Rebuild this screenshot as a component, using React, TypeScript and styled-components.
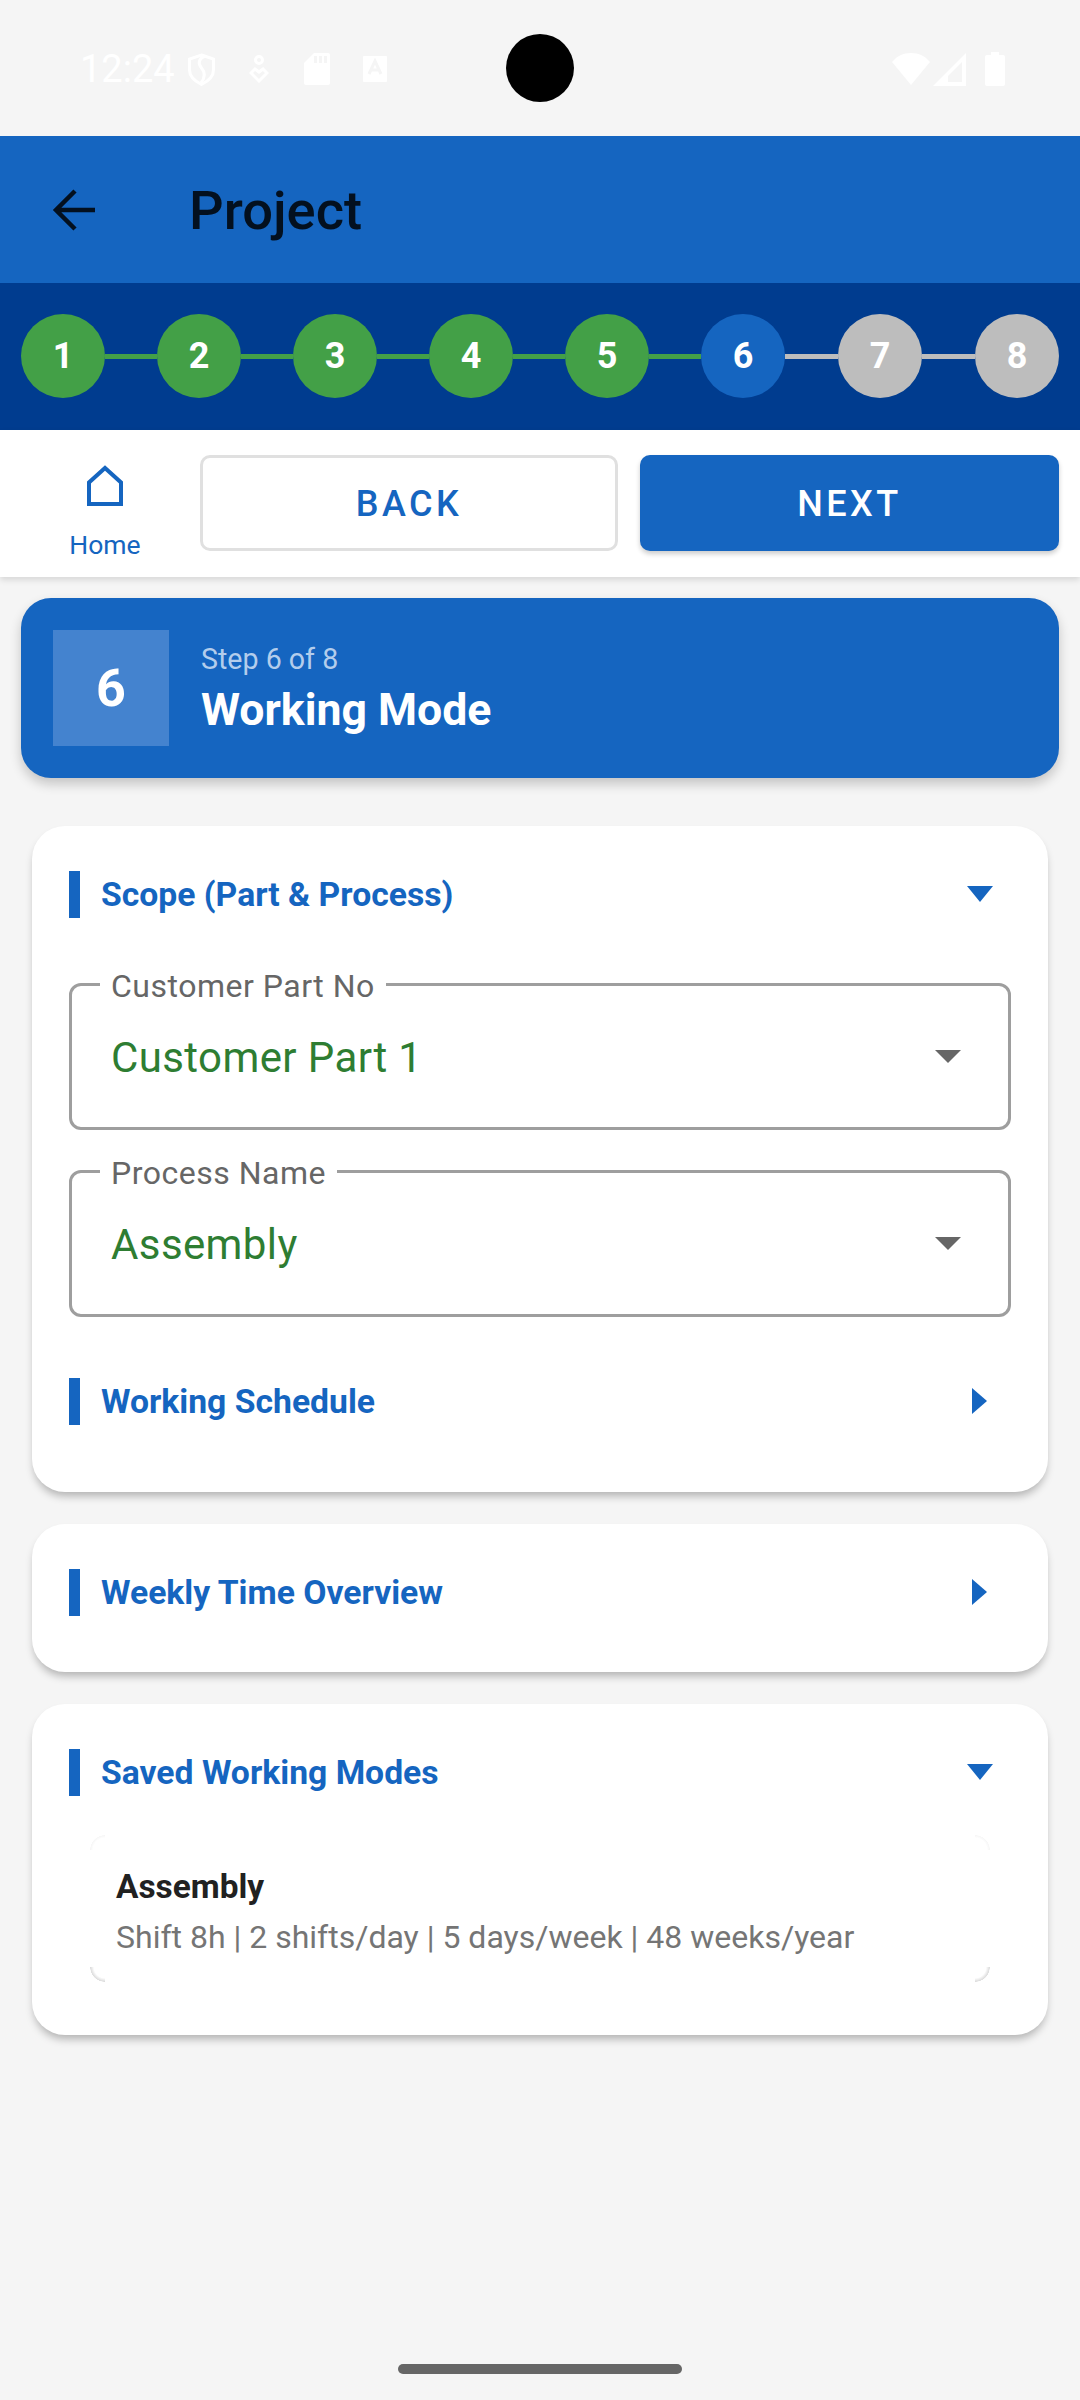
import React from 'react';
import styled, { createGlobalStyle } from 'styled-components';

const steps = [1, 2, 3, 4, 5, 6, 7, 8];
const currentStep = 6;

const stepColor = (n: number) => {
  if (n < currentStep) return '#43a047';
  if (n === currentStep) return '#1565c0';
  return '#bdbdbd';
};

const App = () => {
  return (
    <Page>
      <GlobalStyle />
      <StatusBar>
        <StatusLeft>
          <Clock>12:24</Clock>
          <StatusIcon $gap={16} width="29" height="33" viewBox="0 0 29 33" fill="none" stroke="#fff" strokeWidth="3">
            <path d="M14.5 2l12 4v11c0 6-5 11-12 14.500C7.500 28 2.500 23 2.500 17V6z" />
            <path d="M18 3c-7 3-7 8-3.500 12s4 9-.5 15" />
          </StatusIcon>
          <StatusIcon $gap={33} width="20" height="28" viewBox="0 0 20 28" fill="none" stroke="#fff" strokeWidth="3">
            <circle cx="10" cy="5" r="3.500" />
            <path d="M10 26L2 18l4-4 4 3 4-3 4 4z" />
          </StatusIcon>
          <StatusIcon $gap={35} width="26" height="32" viewBox="0 0 26 32" fill="#fff">
            <path d="M10 0h14a2 2 0 0 1 2 2v28a2 2 0 0 1-2 2H2a2 2 0 0 1-2-2V10z" />
            <path d="M10 3h3v7h-3zM15 3h3v7h-3zM20 3h3v7h-3z" fill="#f5f5f5" />
          </StatusIcon>
          <StatusIcon $gap={33} width="24" height="26" viewBox="0 0 24 26">
            <path fill="#fff" d="M1 0h22a1 1 0 0 1 1 1v24a1 1 0 0 1-1 1H1a1 1 0 0 1-1-1V1a1 1 0 0 1 1-1z" />
            <path fill="none" stroke="#f5f5f5" strokeWidth="3" d="M6 18L12 5l6 13M8 14h8" />
          </StatusIcon>
        </StatusLeft>
        <Camera />
        <StatusRight>
          <StatusIcon $gap={0} width="38" height="32" viewBox="0 0 38 32" fill="#fff">
            <path d="M0 9C5 3 11 0 19 0s14 3 19 9L19 32z" />
          </StatusIcon>
          <StatusIcon $gap={3} width="33" height="33" viewBox="0 0 33 33">
            <path fill="#fff" fillRule="evenodd" d="M33 0v33H0zM29 9L15 23v6h14z" />
          </StatusIcon>
          <StatusIcon $gap={19} width="20" height="34" viewBox="0 0 20 34" fill="#fff">
            <path d="M6 0h8v3h4a2 2 0 0 1 2 2v27a2 2 0 0 1-2 2H2a2 2 0 0 1-2-2V5a2 2 0 0 1 2-2h4z" />
          </StatusIcon>
        </StatusRight>
      </StatusBar>

      <AppBar>
        <svg width="44" height="44" viewBox="0 0 44 44" fill="none" stroke="#03101f" strokeWidth="4.5">
          <path d="M44 22H5M24 3L5 22l19 19" />
        </svg>
        <AppBarTitle>Project</AppBarTitle>
      </AppBar>

      <Stepper>
        {steps.map((n) => (
          <React.Fragment key={n}>
            {n > 1 && <StepLine $done={n <= currentStep} />}
            <StepDot $color={stepColor(n)}>{n}</StepDot>
          </React.Fragment>
        ))}
      </Stepper>

      <ActionBar>
        <HomeTab>
          <HomeIcon width="36" height="41" viewBox="0 0 36 41" fill="none" stroke="#1565c0" strokeWidth="4">
            <path d="M2 39V17.500L18 3l16 14.500V39z" />
          </HomeIcon>
          <HomeLabel>Home</HomeLabel>
        </HomeTab>
        <BackButton>BACK</BackButton>
        <NextButton>NEXT</NextButton>
      </ActionBar>

      <StepCard>
        <StepBadge>6</StepBadge>
        <div>
          <StepCaption>Step 6 of 8</StepCaption>
          <StepName>Working Mode</StepName>
        </div>
      </StepCard>

      <CardStack>
        <Card $bottom={67}>
          <SectionHead>
            <SectionTitle>Scope (Part &amp; Process)</SectionTitle>
            <Caret $dir="down" />
          </SectionHead>
          <Fields>
            <SelectField>
              <FieldLabel>Customer Part No</FieldLabel>
              <FieldValue>Customer Part 1</FieldValue>
              <SelectArrow />
            </SelectField>
            <SelectField>
              <FieldLabel>Process Name</FieldLabel>
              <FieldValue>Assembly</FieldValue>
              <SelectArrow />
            </SelectField>
          </Fields>
          <SubSection>
            <SectionTitle>Working Schedule</SectionTitle>
            <Caret $dir="right" />
          </SubSection>
        </Card>

        <Card $bottom={56}>
          <SectionHead>
            <SectionTitle>Weekly Time Overview</SectionTitle>
            <Caret $dir="right" />
          </SectionHead>
        </Card>

        <Card $bottom={53}>
          <SectionHead>
            <SectionTitle>Saved Working Modes</SectionTitle>
            <Caret $dir="down" />
          </SectionHead>
          <SavedItem>
            <SavedName>Assembly</SavedName>
            <SavedMeta>Shift 8h | 2 shifts/day | 5 days/week | 48 weeks/year</SavedMeta>
          </SavedItem>
        </Card>
      </CardStack>

      <HomeIndicator />
    </Page>
  );
};

export default App;

const GlobalStyle = createGlobalStyle`
  html, body {
    margin: 0;
    padding: 0;
    background: #f5f5f5;
  }
  * {
    box-sizing: border-box;
  }
`;

const Page = styled.div`
  position: relative;
  width: 1080px;
  height: 2400px;
  overflow: hidden;
  background: #f5f5f5;
  font-family: Roboto, 'Liberation Sans', sans-serif;
`;

const StatusBar = styled.div`
  position: relative;
  height: 136px;
  display: flex;
  align-items: center;
  justify-content: space-between;
  padding: 2px 75px 0 80px;
`;

const StatusLeft = styled.div`
  display: flex;
  align-items: center;
`;

const StatusRight = styled.div`
  display: flex;
  align-items: center;
`;

const StatusIcon = styled.svg<{ $gap: number }>`
  display: block;
  flex: none;
  margin-left: ${(p) => p.$gap}px;
`;

const Clock = styled.span`
  width: 91px;
  font-size: 38px;
  line-height: 44px;
  white-space: nowrap;
  color: #fff;
`;

const Camera = styled.div`
  position: absolute;
  left: 506px;
  top: 34px;
  width: 68px;
  height: 68px;
  border-radius: 50%;
  background: #000;
`;

const AppBar = styled.header`
  height: 147px;
  background: #1565c0;
  display: flex;
  align-items: center;
  padding-left: 51px;
  gap: 94px;
`;

const AppBarTitle = styled.h1`
  margin: 0 0 -2px;
  font-size: 54.300px;
  font-weight: 500;
  color: #03101f;
`;

const Stepper = styled.div`
  height: 147px;
  background: #003c8f;
  display: flex;
  align-items: center;
  padding: 0 21px 1px;
`;

const StepDot = styled.div<{ $color: string }>`
  flex: none;
  width: 84px;
  height: 84px;
  border-radius: 50%;
  background: ${(p) => p.$color};
  color: #fff;
  display: flex;
  align-items: center;
  justify-content: center;
  font-size: 36px;
  font-weight: 700;
`;

const StepLine = styled.div<{ $done: boolean }>`
  flex: none;
  width: ${(p) => (p.$done ? 52 : 53)}px;
  height: 5px;
  background: ${(p) => (p.$done ? '#43a047' : '#bdbdbd')};
`;

const ActionBar = styled.div`
  position: relative;
  height: 147px;
  background: #fff;
  display: flex;
  align-items: center;
  padding: 0 21px 1px;
  box-shadow: 0 3px 6px rgba(0, 0, 0, 0.12);
`;

const HomeTab = styled.div`
  width: 168px;
  align-self: flex-start;
  padding-top: 35px;
  display: flex;
  flex-direction: column;
  align-items: center;
`;

const HomeIcon = styled.svg`
  display: block;
`;

const HomeLabel = styled.span`
  margin-top: 23px;
  font-size: 26.500px;
  line-height: 32px;
  color: #1565c0;
`;

const BaseButton = styled.div`
  height: 96px;
  padding-top: 2px;
  border-radius: 10px;
  display: flex;
  align-items: center;
  justify-content: center;
  font-size: 36px;
  font-weight: 500;
  letter-spacing: 3.500px;
`;

const BackButton = styled(BaseButton)`
  width: 418px;
  margin-left: 11px;
  background: #fff;
  border: 3px solid #e0e0e0;
  color: #1565c0;
`;

const NextButton = styled(BaseButton)`
  width: 419px;
  margin-left: 22px;
  background: #1565c0;
  color: #fff;
  box-shadow: 0 3px 5px rgba(0, 0, 0, 0.2);
`;

const StepCard = styled.section`
  height: 180px;
  margin: 21px 21px 0;
  padding: 32px;
  display: flex;
  align-items: flex-start;
  gap: 32px;
  background: #1565c0;
  border-radius: 30px;
  box-shadow: 0 6px 12px rgba(0, 0, 0, 0.2);
`;

const StepBadge = styled.div`
  width: 116px;
  height: 116px;
  background: #4483cf;
  color: #fff;
  display: flex;
  align-items: center;
  justify-content: center;
  font-size: 52px;
  font-weight: 700;
`;

const StepCaption = styled.div`
  margin-top: 12px;
  font-size: 28.600px;
  line-height: 34px;
  color: #b3cdec;
`;

const StepName = styled.div`
  margin-top: 9px;
  font-size: 44.600px;
  line-height: 50px;
  font-weight: 700;
  color: #fff;
`;

const CardStack = styled.div`
  margin: 48px 32px 0;
  display: flex;
  flex-direction: column;
  gap: 32px;
`;

const Card = styled.section<{ $bottom: number }>`
  padding: 45px 37px ${(p) => p.$bottom}px;
  background: #fff;
  border-radius: 33px;
  box-shadow: 0 6px 8px -2px rgba(0, 0, 0, 0.28);
`;

const SectionHead = styled.div`
  height: 47px;
  display: flex;
  align-items: center;
  justify-content: space-between;
  padding-left: 21px;
  padding-right: 18px;
  border-left: 11px solid #1565c0;
`;

const SubSection = styled(SectionHead)`
  margin-top: 61px;
`;

const SectionTitle = styled.h2`
  margin: 0;
  font-size: 33.700px;
  font-weight: 700;
  color: #1565c0;
`;

const Caret = styled.div<{ $dir: 'down' | 'right' }>`
  width: 0;
  height: 0;
  ${(p) =>
    p.$dir === 'down'
      ? `
    margin-top: -2px;
    border-left: 13px solid transparent;
    border-right: 13px solid transparent;
    border-top: 16px solid #1565c0;
  `
      : `
    margin-top: -2px;
    margin-right: 6px;
    border-top: 13px solid transparent;
    border-bottom: 13px solid transparent;
    border-left: 15px solid #1565c0;
  `}
`;

const Fields = styled.div`
  margin-top: 65px;
  display: flex;
  flex-direction: column;
  gap: 40px;
`;

const SelectField = styled.div`
  position: relative;
  height: 147px;
  border: 3px solid #9e9e9e;
  border-radius: 12px;
  display: flex;
  align-items: center;
  padding: 0 0 0 39px;
`;

const FieldLabel = styled.span`
  position: absolute;
  left: 28px;
  top: -18px;
  padding: 0 11px;
  background: #fff;
  font-size: 32px;
  line-height: 36px;
  letter-spacing: 0.500px;
  color: #666;
`;

const FieldValue = styled.span`
  margin-top: 2px;
  font-size: 42px;
  letter-spacing: 0.400px;
  color: #2e7d32;
`;

const SelectArrow = styled.div`
  margin-left: auto;
  margin-right: 47px;
  width: 0;
  height: 0;
  border-left: 13px solid transparent;
  border-right: 13px solid transparent;
  border-top: 13px solid #666;
`;

const SavedItem = styled.div`
  margin: 39px 21px 0;
  height: 147px;
  padding: 33px 26px;
  border-radius: 14px;
  background:
    radial-gradient(circle at 100% 0, #fff 11px, #dcdcdc 14.500px, #fff 15px) 0 100% / 15px 15px no-repeat,
    radial-gradient(circle at 0 0, #fff 11px, #dcdcdc 14.500px, #fff 15px) 100% 100% / 15px 15px no-repeat,
    radial-gradient(circle at 100% 100%, #fff 12px, #f6f6f6 14.500px, #fff 15px) 0 0 / 15px 15px no-repeat,
    radial-gradient(circle at 0 100%, #fff 12px, #f6f6f6 14.500px, #fff 15px) 100% 0 / 15px 15px no-repeat,
    #fff;
`;

const SavedName = styled.div`
  font-size: 33.400px;
  line-height: 38px;
  font-weight: 700;
  color: #212121;
`;

const SavedMeta = styled.div`
  margin-top: 12px;
  font-size: 32px;
  line-height: 38px;
  white-space: nowrap;
  color: #757575;
`;

const HomeIndicator = styled.div`
  position: absolute;
  left: 398px;
  top: 2364px;
  width: 284px;
  height: 10px;
  border-radius: 5px;
  background: #666;
`;
